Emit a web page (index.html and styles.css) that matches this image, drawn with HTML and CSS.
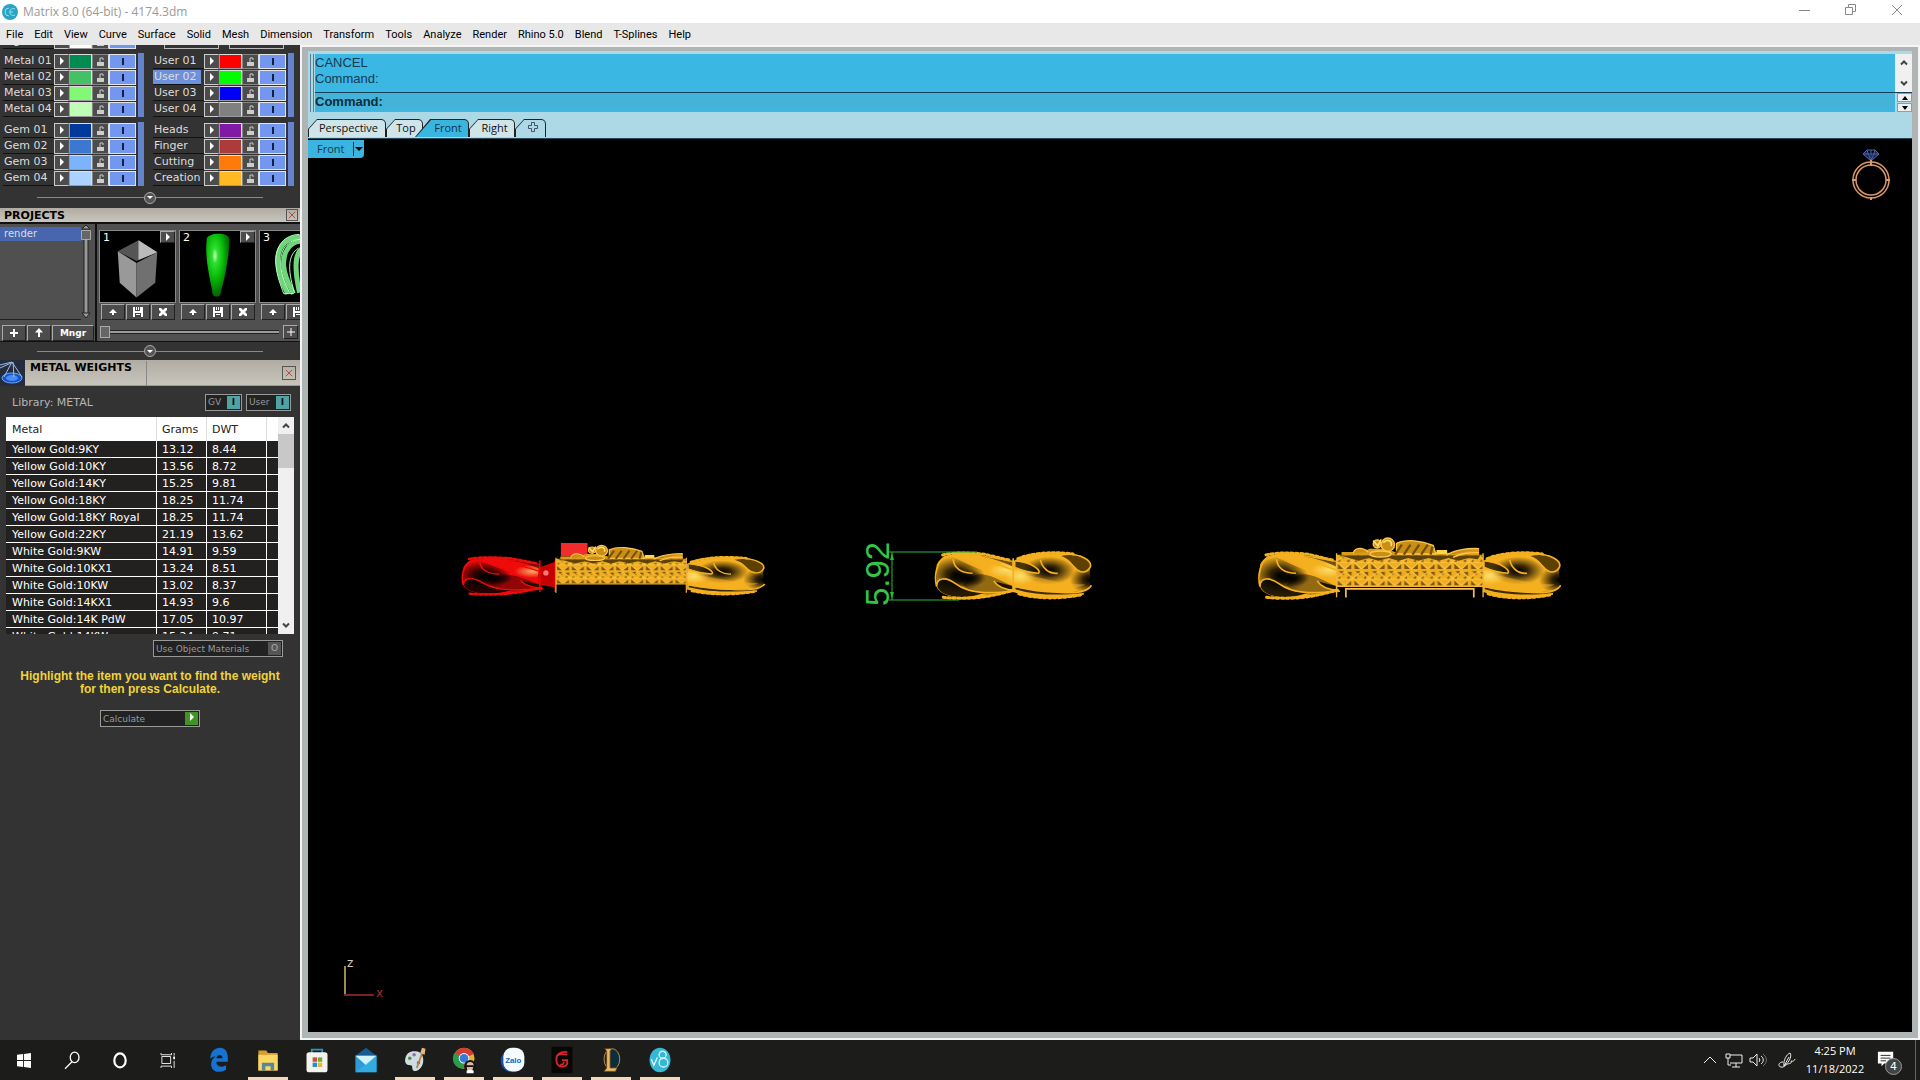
FILE: index.html
```
<!DOCTYPE html>
<html lang="en">
<head>
  <meta charset="UTF-8">
  <title>Matrix 8.0 (64-bit) - 4174.3dm</title>
  <link rel="stylesheet" href="styles.css">
</head>
<body>

<header class="titlebar">
  <svg class="app-icon" viewBox="0 0 16 16"><circle cx="8" cy="8" r="8" fill="#2ba3c4"/><path d="M7 4a4 4 0 1 0 0 8M13 5a3.500 3.500 0 1 0 0 6M8 8h3" fill="none" stroke="#8fe0f2"/></svg>
  <span class="title">Matrix 8.0 (64-bit) - 4174.3dm</span>
  <div class="window-buttons">
    <button aria-label="Minimize"><svg viewBox="0 0 12 12"><path d="M0 6.500h11"/></svg></button>
    <button aria-label="Restore"><svg viewBox="0 0 12 12"><path d="M.5 3.500h7v7h-7zM3.500 3V.5h7v7H8"/></svg></button>
    <button aria-label="Close"><svg viewBox="0 0 12 12"><path d="M1 1l10 10M11 1L1 11"/></svg></button>
  </div>
</header>

<nav class="menubar">
  <a href="#">File</a><a href="#">Edit</a><a href="#">View</a><a href="#">Curve</a>
  <a href="#">Surface</a><a href="#">Solid</a><a href="#">Mesh</a><a href="#">Dimension</a>
  <a href="#">Transform</a><a href="#">Tools</a><a href="#">Analyze</a><a href="#">Render</a>
  <a href="#">Rhino 5.0</a><a href="#">Blend</a><a href="#">T-Splines</a><a href="#">Help</a>
</nav>

<main class="main">
  <aside class="sidebar">

    <section class="layers">
      <div class="layers-scroll">
        <div class="layer-column" id="layersLeft"></div>
        <div class="layer-column">
          <div class="show-hide">
            <button>Hide <i></i></button>
            <button>Show <i></i></button>
          </div>
          <div id="layersRight"></div>
        </div>
      </div>
    </section>
    <div class="separator"><button aria-label="Collapse layers"></button></div>

    <section>
      <div class="panel-head">
        <h2>PROJECTS</h2>
        <button class="close" aria-label="Close projects"><svg viewBox="0 0 10 10"><path d="M1 1l8 8M9 1L1 9"/></svg></button>
      </div>
      <div class="projects">
        <div class="project-list">
          <div class="project-scroll">
            <div class="project-names"><a href="#">render</a></div>
            <svg class="vslider" viewBox="0 0 10 94"><path d="M5 14v74" stroke="#222" stroke-width="5"/><path d="M5 14v74" stroke="#999" stroke-width="3"/><path d="M1 4l4-4 4 4zM1 88h8l-4 5z" fill="#999" stroke="#222"/><path d="M.5 5.500h9v9h-9z" fill="#666" stroke="#aaa"/></svg>
          </div>
          <div class="project-buttons">
            <button class="bevel" aria-label="Add"><svg viewBox="0 0 10 10"><path d="M4 1h2v3h3v2H6v3H4V6H1V4h3z"/></svg></button>
            <button class="bevel" aria-label="Up"><svg viewBox="0 0 10 10"><path d="M5 0l4 4.500H6V9H4V4.500H1z"/></svg></button>
            <button class="bevel manager">Mngr</button>
          </div>
        </div>
        <div class="project-view">
          <div class="thumbs">
            <div class="thumb">
              <div class="thumb-picture"><span>1</span><button class="bevel play" aria-label="Play 1"><svg viewBox="0 0 6 8"><path d="M1 0l4 4-4 4z"/></svg></button>
                <svg viewBox="0 0 76 71"><path d="M18 20l21-11 19 12-21 9z" fill="#555"/><path d="M39 9l19 12-19 8z" fill="#bbb"/><path d="M18 20l19 12v35L20 52z" fill="#999"/><path d="M37 32l21-11-2 31-19 15z" fill="#707070"/></svg>
              </div>
              <div class="thumb-buttons"></div>
            </div>
            <div class="thumb">
              <div class="thumb-picture"><span>2</span><button class="bevel play" aria-label="Play 2"><svg viewBox="0 0 6 8"><path d="M1 0l4 4-4 4z"/></svg></button>
                <svg viewBox="0 0 76 71"><defs><radialGradient id="greenShine" cx=".38" cy=".35" r=".6"><stop offset="0" stop-color="#d5ffd0"/><stop offset=".2" stop-color="#30e030"/><stop offset=".6" stop-color="#08ba08"/><stop offset="1" stop-color="#037003"/></radialGradient></defs><path d="M27 8c0-7 23-8 23 0 0 18-5 41-9 55-1 4-7 4-8 0C31 49 25 30 27 8z" fill="url(#greenShine)"/></svg>
              </div>
              <div class="thumb-buttons"></div>
            </div>
            <div class="thumb">
              <div class="thumb-picture"><span>3</span>
                <svg viewBox="0 0 76 71"><path d="M42 6C28 5 17 14 18 32c1 14 6 22 10 31M42 10C31 10 23 20 24 35c1 12 6 20 10 28M43 17c-7 5-9 17-3 45" fill="none" stroke="#6fd67c" stroke-width="5"/><path d="M40 3C25 3 15 15 16 32c1 14 5 22 8 31h10M39 17c-10 6-12 20-4 45M42 8C28 8 20 18 21 34c1 12 5 20 9 28" fill="none" stroke="#b5ffbd"/></svg>
              </div>
              <div class="thumb-buttons"></div>
            </div>
          </div>
          <div class="zoom-row">
            <input type="range" min="0" max="100" value="0" aria-label="Thumbnail scroll">
            <button class="bevel" aria-label="More"><svg viewBox="0 0 10 10"><path d="M4.500 1h1v3.500H9v1H5.500V9h-1V5.500H1v-1h3.500z"/></svg></button>
          </div>
        </div>
      </div>
    </section>
    <div class="separator low"><button aria-label="Collapse projects"></button></div>

    <section>
      <div class="panel-head tall">
        <svg class="scale-icon" viewBox="0 0 25 26"><rect width="25" height="26" fill="#252d3d"/><ellipse cx="12" cy="18" rx="10" ry="5" fill="#1553c8" stroke="#69a7ff"/><ellipse cx="12" cy="18" rx="6" ry="3" fill="#4b8cf0"/><path d="M0 5l12-3 10 15M12 2L4 17M13 2l1 15M0 8l11-5" fill="none" stroke="#9cbce8"/></svg>
        <h2>METAL WEIGHTS</h2>
        <button class="close" aria-label="Close metal weights"><svg viewBox="0 0 10 10"><path d="M1 1l8 8M9 1L1 9"/></svg></button>
      </div>
      <div class="library">
        <span>Library: METAL</span>
        <button class="flat">GV<b class="teal">I</b></button>
        <button class="flat">User<b class="teal">I</b></button>
      </div>
      <div class="metal-box">
        <table class="metals">
          <thead><tr><th>Metal</th><th>Grams</th><th>DWT</th><th></th></tr></thead>
          <tbody id="metals"></tbody>
        </table>
        <div class="scrollbar">
          <svg viewBox="0 0 8 6"><path d="M1 5l3-3 3 3"/></svg>
          <div class="scroll-thumb"></div>
          <svg viewBox="0 0 8 6"><path d="M1 1l3 3 3-3"/></svg>
        </div>
      </div>
      <div class="materials"><button class="flat">Use Object Materials<b class="grey">O</b></button></div>
      <p class="hint">Highlight the item you want to find the weight<br>for then press Calculate.</p>
      <div class="calculate"><button class="flat">Calculate<b class="green"><svg viewBox="0 0 6 8"><path d="M1 0l4 4-4 4z"/></svg></b></button></div>
    </section>
  </aside>

  <div class="workspace">
    <div class="command">
      <div class="grip"></div>
      <div class="command-text">
        <div class="history">CANCEL<br>Command:</div>
        <div class="prompt"><label for="cmd">Command:</label><input id="cmd" type="text"></div>
      </div>
      <div class="command-side">
        <div class="scrollbar">
          <svg viewBox="0 0 8 6"><path d="M1 5l3-3 3 3"/></svg>
          <svg viewBox="0 0 8 6"><path d="M1 1l3 3 3-3"/></svg>
        </div>
        <button aria-label="Previous command"><svg viewBox="0 0 6 4"><path d="M0 4l3-4 3 4z"/></svg></button>
        <button aria-label="Next command"><svg viewBox="0 0 6 4"><path d="M0 0l3 4 3-4z"/></svg></button>
      </div>
    </div>

    <div class="tabs">
      <button class="tab perspective">Perspective</button>
      <button class="tab top">Top</button>
      <button class="tab active">Front</button>
      <button class="tab right">Right</button>
      <button class="tab add" aria-label="Add viewport"><svg viewBox="0 0 10 10"><path d="M3.500.5h3v3h3v3h-3v3h-3v-3h-3v-3h3z"/></svg></button>
    </div>

    <div class="viewport">
      <button class="view-label">Front <i></i></button>

      <svg class="scene" viewBox="308 139 1604 893">
        <defs>
          <radialGradient id="shade"><stop offset="0" stop-color="#000"/><stop offset=".35" stop-color="#000" stop-opacity=".8"/><stop offset="1" stop-color="#000" stop-opacity="0"/></radialGradient>
          <radialGradient id="shine"><stop offset="0" stop-color="#fff38a" stop-opacity=".7"/><stop offset="1" stop-color="#fff38a" stop-opacity="0"/></radialGradient>
          <pattern id="lattice" width="50" height="50" patternUnits="userSpaceOnUse" x="290" y="100">
            <rect width="50" height="50" fill="#efae1f"/>
            <path d="M4 47h16L4 31zM28 47h16V31zM7 4h14v12zM45 5v14L31 7zM2 24l9-6v12zM30 24l9-6v12z" fill="#7d560a"/>
            <path d="M0 25l25-21 25 21M0 25l25 22 25-22M0 27h50" fill="none" stroke="#ffc341" stroke-width="3"/>
          </pattern>
          <!-- left end of a link -->
          <g id="loopLeft">
            <path d="M60 135C75 102 120 98 170 101L290 122V212C250 214 225 234 180 236C115 238 68 226 60 200Z" fill="currentColor"/>
            <ellipse cx="120" cy="165" rx="85" ry="56" fill="url(#shade)"/>
            <ellipse cx="150" cy="175" rx="60" ry="26" fill="url(#shade)"/>
            <path d="M160 172c38-22 70 0 128 26v18c-60 16-110 10-150-20z" fill="#000" opacity=".4"/>
            <path d="M110 112C160 108 220 122 288 158V190C240 172 170 140 110 112z" fill="currentColor" opacity=".9"/>
            <ellipse cx="268" cy="150" rx="55" ry="24" fill="url(#shine)"/>
            <path d="M62 200C60 174 88 168 118 192C145 213 170 218 205 218C165 236 75 240 62 200z" fill="#000" opacity=".85"/>
            <path d="M232 184l56 14v13c-25-3-48-10-56-27z" fill="#1b1300"/>
            <path d="M190 108l98 18v14c-35-18-65-25-98-32z" fill="#000" opacity=".55"/>
            <g fill="none" stroke="currentColor" stroke-width="5">
              <path d="M60 200C52 168 60 125 85 110C150 100 220 125 290 150M60 200C60 172 88 170 118 192C160 224 220 220 300 214M110 118C112 145 135 160 168 160M232 183C245 205 270 210 298 212"/>
              <path d="M78 105C110 97 160 98 205 103L285 122M80 232C140 240 220 234 292 210" stroke-width="9" stroke-linecap="round" stroke-dasharray="7 8"/>
            </g>
          </g>
          <!-- right end of a link -->
          <g id="loopRight">
            <path d="M730 122C780 100 850 97 900 101C948 106 965 125 958 155C962 190 962 208 935 222C880 236 790 235 730 212Z" fill="currentColor"/>
            <ellipse cx="835" cy="152" rx="80" ry="42" fill="url(#shade)"/>
            <ellipse cx="958" cy="180" rx="60" ry="44" fill="url(#shade)"/>
            <path d="M745 168c60-5 80 20 200 26-50 22-140 18-200-6z" fill="currentColor" opacity=".5"/>
            <ellipse cx="750" cy="168" rx="48" ry="28" fill="url(#shine)"/>
            <path d="M735 124C780 130 812 146 806 160C775 156 755 150 735 142z" fill="#000" opacity=".7"/>
            <path d="M872 108C920 98 970 118 958 145C950 165 925 158 910 138C900 124 890 114 872 108z" fill="#5d4000"/>
            <path d="M735 202C810 222 880 222 955 210L935 222C850 226 790 225 735 208z" fill="#000" opacity=".75"/>
            <g fill="none" stroke="currentColor" stroke-width="5">
              <path d="M735 122C790 128 815 155 803 160C775 158 750 150 732 142M810 120C815 145 835 162 862 160M800 106C850 96 890 118 912 142C930 162 950 160 960 140C965 120 930 103 890 102M963 196C945 228 880 222 732 200M730 214C790 232 870 232 940 222"/>
              <path d="M742 116C790 97 850 95 908 102M745 222C800 237 870 238 935 224" stroke-width="9" stroke-linecap="round" stroke-dasharray="7 8"/>
            </g>
          </g>
          <!-- pave plate with the ornament on it -->
          <g id="plate">
            <path d="M290 104h440v94H290z" fill="url(#lattice)"/>
            <path d="M298 106h424l-8 12-28-4-30 8-30-8-30 8-30-8-30 8-30-8-30 8-30-8-30 8-30-8-30 8-28-8z" fill="#5d4308"/>
            <path d="M305 96h60l25-10h50l25 10h120l60 4 55-16h18v22H305z" fill="#d99b19"/>
            <g fill="#c88e15" stroke="#ffc649" stroke-width="4">
              <path d="M340 100c5-20 30-18 45-4M620 106c20-14 60-22 98-20M640 112c25-14 50-14 78-14"/>
              <ellipse cx="422" cy="102" rx="32" ry="9"/>
              <circle cx="412" cy="72" r="12"/><circle cx="444" cy="74" r="20"/>
              <path d="M470 70c30-14 75-8 110 6l8 26H470z"/>
            </g>
            <path d="M466 104l20-30M492 104l20-30M518 104l20-30M544 104l20-30M572 104l6-24" fill="none" stroke="#735008" stroke-width="7"/>
            <path d="M400 62l14 16 10-20M430 68c14-14 28-4 24 10" fill="none" stroke="#ffe06d" stroke-width="5"/>
            <path d="M590 90h32v12h-32z" fill="#ffd54b"/>
            <path d="M290 100v132M730 100v132M290 199h440" fill="none" stroke="#f6b53d" stroke-width="4"/>
          </g>
        </defs>

        <g color="#f5b01f">
          <g transform="translate(440 527) scale(.333)" color="#f00b0b">
            <use href="#loopLeft" transform="translate(10 10) scale(1 .82)"/>
            <path d="M296 122l50-18v78l-50-10z" fill="#d00000"/>
            <circle cx="322" cy="145" r="27" fill="#c40000"/><circle cx="318" cy="138" r="8" fill="#ff7676"/>
            <path d="M300 100v95M346 100v95" stroke="#f00" stroke-width="4"/>
            <path d="M363 48h80v40h-80z" fill="#f22b2b"/>
          </g>
          <g transform="translate(440 527) scale(.333)">
            <use href="#loopRight" transform="translate(12 10) scale(1 .82)"/>
            <use href="#plate" transform="translate(90 12) scale(.89 .8)"/>
          </g>
          <g transform="translate(850 520) scale(.333)">
            <use href="#loopLeft" transform="translate(200)"/>
            <use href="#loopRight" transform="translate(-238)"/>
            <path d="M490 115v100" stroke="#f8ae20" stroke-width="5"/>
          </g>
          <g transform="translate(1240 520) scale(.333)">
            <use href="#loopLeft"/>
            <use href="#loopRight"/>
            <use href="#plate"/>
            <path d="M318 233v-26h384v26" fill="none" stroke="#ffbe58" stroke-width="5"/>
          </g>
        </g>
        <path d="M889 552h88M889 600h70M892 552v48" fill="none" stroke="#2bb63c"/>
        <path d="M892 553l2 7h-4zM892 599l2-7h-4z" fill="#2bb63c"/>
        <text class="dimension" transform="translate(889 606) rotate(-90)">5.92</text>
      </svg>

      <svg class="ring" viewBox="0 0 40 52">
        <path d="M13 5l4-4h8l4 4-8 7zM13 5h16M17 1l4 11 4-11M21 1v11" fill="#1c2850" stroke="#4c66b5"/>
        <g fill="none" stroke="#dc9868" stroke-width="1.500"><circle cx="21" cy="31" r="18"/><circle cx="21" cy="31" r="15"/><path d="M21 11v6M2 31h4M36 31h4M21 48v3" stroke-width="2"/></g>
      </svg>
      <svg class="axis" viewBox="0 0 44 42">
        <path d="M2 8v28" stroke="#a08a4c" stroke-width="2"/><path d="M1 37h30" stroke="#7a2222" stroke-width="2"/>
        <text x="4" y="9" fill="#d8cbb0">z</text><text x="33" y="39" fill="#a03030">x</text>
      </svg>
    </div>
  </div>
</main>

<footer class="taskbar">
  <div class="apps">
    <button class="sys" aria-label="Start"><svg viewBox="0 0 32 32"><path d="M8 10l7-1v7H8zM16 9l8-1v8h-8zM8 17h7v7l-7-1zM16 17h8v8l-8-1z" fill="#fff"/></svg></button>
    <button class="sys" aria-label="Search"><svg viewBox="0 0 32 32"><ellipse cx="19" cy="13" rx="5" ry="6" fill="none" stroke="#fff" stroke-width="1.500"/><path d="M16 18l-8 8" stroke="#fff" stroke-width="1.500"/></svg></button>
    <button class="sys" aria-label="Cortana"><svg viewBox="0 0 32 32"><ellipse cx="16" cy="16.500" rx="6.500" ry="8" fill="none" stroke="#fff" stroke-width="2.500"/></svg></button>
    <button class="sys" aria-label="Task view"><svg viewBox="0 0 32 32"><path d="M9 12h10v8H9zM8 8v2h12V8M8 25v-2h12v2M23 8v3M23 17v8" fill="none" stroke="#fff"/><path d="M22 12h2v3h-2z" fill="#fff"/></svg></button>
    <button aria-label="Edge"><svg viewBox="0 0 32 32"><path d="M6 15C6 6 12 2 17 2c7 0 10 6 9 16H13c0 6 7 7 11 4v5c-8 5-17 2-17-6 0-4 2-7 5-9-4 0-6 3-6 3zM13 14h7c0-5-6-5-7 0z" fill="#1673d2"/></svg></button>
    <button class="running" aria-label="File Explorer"><svg viewBox="0 0 32 32"><path d="M5 5h9l2 3h11v20H5z" fill="#d99c2a"/><path d="M5 10h22v18H5z" fill="#fbd765"/><path d="M9 28v-9h14v9h-4v-5h-6v5z" fill="#56889c"/></svg></button>
    <button aria-label="Store"><svg viewBox="0 0 32 32"><path d="M10 9V4h12v5" fill="none" stroke="#2c98b5" stroke-width="2"/><rect x="4" y="7" width="24" height="23" rx="3" fill="#f2f3ef"/><path d="M11 13h5v5h-5z" fill="#c95230"/><path d="M17 13h5v5h-5z" fill="#74a839"/><path d="M11 19h5v5h-5z" fill="#2f8dc6"/><path d="M17 19h5v5h-5z" fill="#e6b83a"/></svg></button>
    <button aria-label="Mail"><svg viewBox="0 0 32 32"><path d="M4 11L16 2l12 9v18H4z" fill="#155d91"/><path d="M4 11h24v19H4z" fill="#2d9bd6"/><path d="M4 11h24L16 22z" fill="#d5f1fb"/><path d="M4 30L28 11v19z" fill="#32b7e8" opacity=".6"/></svg></button>
    <button class="running" aria-label="Paint"><svg viewBox="0 0 32 32"><path d="M15 6c8-1 12 6 10 14-2 7-8 10-11 8-2-2 0-6-3-6-6 0-7-4-6-8 1-5 5-8 10-8z" fill="#cfdde3"/><circle cx="10" cy="14" r="2" fill="#558b36"/><circle cx="15" cy="10" r="2" fill="#8d6bb5"/><circle cx="20" cy="19" r="2" fill="#3f76bd"/><path d="M25 6l-7 19" stroke="#be7f43" stroke-width="2"/><path d="M24 2l4 1-1 7-5-2z" fill="#e3b77b"/></svg></button>
    <button class="running" aria-label="Chrome"><svg viewBox="0 0 32 32"><circle cx="16" cy="14" r="12" fill="#e4b52c"/><path d="M16 14L5 9C10-1 24 1 27 9z" fill="#d43d32"/><path d="M16 14v12C4 26 1 15 5 8z" fill="#2b9b4c"/><circle cx="16" cy="14" r="6" fill="#fff"/><circle cx="16" cy="14" r="5" fill="#3977d8"/><circle cx="23" cy="23" r="7" fill="#181512"/><path d="M19 22c0-5 8-5 8 0l-2 8h-5z" fill="#d9bba2"/><path d="M18 22h9v2h-9z" fill="#111"/><path d="M19 28l4-1 4 1v3h-8z" fill="#fff"/></svg></button>
    <button class="running zalo" aria-label="Zalo"><svg viewBox="0 0 32 32"><circle cx="15" cy="17" r="13" fill="#154eb4"/><rect x="5" y="2" width="24" height="27" rx="10" fill="#f5faff"/><text x="7" y="19">Zalo</text></svg></button>
    <button class="running" aria-label="Garena"><svg viewBox="0 0 32 32"><path d="M4 1h24v30H4z" fill="#090606"/><path d="M22 7c-9-2-14 4-12 12 2 6 10 6 12 1v-4h-6M9 12c3-3 8-3 13-2M14 21c3 1 4-1 4-3" fill="none" stroke="#d8262b" stroke-width="2"/></svg></button>
    <button class="running" aria-label="League"><svg viewBox="0 0 32 32"><ellipse cx="17" cy="15" rx="9" ry="12" fill="#0c2d3b" stroke="#c69b4b"/><path d="M9 3h8l-2 3v19h8l-2 4H8l3-4V6z" fill="#e7ba69" stroke="#6c4219"/></svg></button>
    <button class="running" aria-label="Matrix"><svg viewBox="0 0 32 32"><ellipse cx="16" cy="16" rx="12" ry="14" fill="#36b7d6"/><path d="M6 15l3 7 4-9" fill="none" stroke="#d6f8ff" stroke-width="1.500"/><circle cx="19" cy="10" r="4" fill="none" stroke="#d6f8ff" stroke-width="1.500"/><circle cx="20" cy="19" r="5" fill="none" stroke="#d6f8ff" stroke-width="1.500"/></svg></button>
  </div>
  <div class="tray">
    <svg viewBox="0 0 20 20"><path d="M4 13l6-6 6 6"/></svg>
    <svg viewBox="0 0 20 20"><path d="M6 5h12v8H6M12 13v4M8 17h8M2 4h4v4H2zM4 8v7h3"/></svg>
    <svg viewBox="0 0 20 20"><path d="M2 8h3l4-4v12l-4-4H2zM11 8c1 1 1 3 0 4M13 6c3 2 3 6 0 8"/><path d="M15 4c5 4 4 9 0 12" opacity=".4"/></svg>
    <svg class="pen" viewBox="0 0 20 20"><path d="M7 16c-1-6 3-12 6-13 2 2 0 9-6 13zM7 16l5-9M6 12c-5 0-5 5-2 5 3 1 5-3 7-3 2-1 4 0 3-3 2 1 4-1 4-2"/></svg>
    <div class="clock">4:25 PM<br>11/18/2022</div>
    <button class="notes" aria-label="Notifications"><svg viewBox="0 0 20 20"><path d="M1 2h17v13H8l-3 3v-3H1z" fill="#fff"/><path d="M4 6h11M4 9h11M4 12h6" stroke="#1c1c1c"/></svg><span>4</span></button>
  </div>
</footer>

<script>
  const left = [["Lights", "#ffffff"], ["Metal 01", "#008c50"], ["Metal 02", "#45c165"], ["Metal 03", "#83f776"], ["Metal 04", "#bfffb5"],
    ["Gem 01", "#00389c"], ["Gem 02", "#3c78cf"], ["Gem 03", "#7db3fa"], ["Gem 04", "#aed2ff"]];
  const right = [["User 01", "#fe0000"], ["User 02", "#00fe00"], ["User 03", "#0000f5"], ["User 04", "#808080"],
    ["Heads", "#8019a6"], ["Finger", "#ae3b3b"], ["Cutting", "#ff7a08"], ["Creation", "#ffba24"]];

  function layerRow([name, color]) {
    return `<div class="layer${name === "User 02" ? " selected" : ""}">
      <span>${name}</span>
      <button class="bevel" aria-label="${name} options"><svg viewBox="0 0 6 8"><path d="M1 0l4 4-4 4z"/></svg></button>
      <button class="swatch" style="background:${color}" aria-label="${name} color"></button>
      <button class="bevel lock" aria-label="Lock ${name}"><svg viewBox="0 0 9 11"><path d="M1 6h7v4H1z"/><path d="M4 6V2h3v2" fill="none" stroke="#ccc"/></svg></button>
      <button class="toggle" aria-label="Show ${name}"><i></i></button>
    </div>`;
  }

  function group(rows) {
    return `<div class="layer-group">${rows.map(layerRow).join("")}</div>`;
  }

  document.getElementById("layersLeft").innerHTML =
    layerRow(left[0]) + group(left.slice(1, 5)) + group(left.slice(5));
  document.getElementById("layersRight").innerHTML =
    group(right.slice(0, 4)) + group(right.slice(4));

  const metals = [
    ["Yellow Gold:9KY", "13.12", "8.44"],
    ["Yellow Gold:10KY", "13.56", "8.72"],
    ["Yellow Gold:14KY", "15.25", "9.81"],
    ["Yellow Gold:18KY", "18.25", "11.74"],
    ["Yellow Gold:18KY Royal", "18.25", "11.74"],
    ["Yellow Gold:22KY", "21.19", "13.62"],
    ["White Gold:9KW", "14.91", "9.59"],
    ["White Gold:10KX1", "13.24", "8.51"],
    ["White Gold:10KW", "13.02", "8.37"],
    ["White Gold:14KX1", "14.93", "9.6"],
    ["White Gold:14K PdW", "17.05", "10.97"],
    ["White Gold:14KW", "15.24", "9.71"]
  ];
  document.getElementById("metals").innerHTML = metals
    .map(m => `<tr><td>${m[0]}</td><td>${m[1]}</td><td>${m[2]}</td><td></td></tr>`).join("");

  document.querySelectorAll(".thumb-buttons").forEach(el => {
    el.innerHTML = `
      <button class="bevel" aria-label="Load"><svg viewBox="0 0 10 10"><path d="M5 2l4 4H6v2H4V6H1z"/></svg></button>
      <button class="bevel" aria-label="Save"><svg viewBox="0 0 10 10"><path d="M0 0h2v4h5V0h3v10H0zM3 0h1v3H3zM5 0h1v3H5z"/><path d="M2 6h6v4H2z" fill="#444"/><path d="M3 7h4v1H3z"/></svg></button>
      <button class="bevel" aria-label="Delete"><svg viewBox="0 0 10 10"><path d="M1 1h2l2 2 2-2h2v2L7 5l2 2v2H7L5 7 3 9H1V7l2-2-2-2z"/></svg></button>`;
  });
</script>

</body>
</html>
```

FILE: styles.css
```
* {
  box-sizing: border-box;
}
body {
  margin: 0;
  height: 100vh;
  display: flex;
  flex-direction: column;
  overflow: hidden;
  background: #333;
  font-family: "DejaVu Sans", Verdana, sans-serif;
  font-size: 11px;
}
button {
  font: inherit;
  padding: 0;
  border: none;
  background: none;
  color: inherit;
  cursor: pointer;
}
a {
  color: inherit;
  text-decoration: none;
}
h2 {
  margin: 0;
  font-size: 11px;
  line-height: 13px;
}

/* title and menu */
.titlebar {
  display: flex;
  align-items: center;
  height: 23px;
  padding-left: 2px;
  background: #fff;
  color: #999;
  font-family: "Open Sans", sans-serif;
}
.title {
  font-size: 12px;
  line-height: 16px;
}
.app-icon {
  width: 16px;
  height: 16px;
  margin-right: 5px;
}
.window-buttons {
  display: flex;
  margin-left: auto;
}
.window-buttons button {
  width: 46px;
  height: 20px;
}
.window-buttons svg {
  width: 12px;
  height: 12px;
  fill: none;
  stroke: #888;
}
.menubar {
  display: flex;
  align-items: center;
  gap: 11px;
  height: 22px;
  padding-left: 6px;
  background: #e8e8e8;
  color: #000;
  font-family: Roboto, sans-serif;
}

.main {
  flex: 1;
  display: flex;
  min-height: 0;
}
.sidebar {
  width: 300px;
  flex: none;
  overflow: hidden;
  background: #333;
  color: #ddd;
}

/* layers */
.bevel {
  display: flex;
  align-items: center;
  justify-content: center;
  background: #4c4c4c;
  border: 1px solid;
  border-color: #aaa #222 #222 #aaa;
}
.bevel svg {
  width: 10px;
  height: 10px;
  fill: #fff;
}
.layers {
  height: 142px;
  display: flex;
  align-items: flex-end;
  padding-bottom: 1px;
  overflow: hidden;
}
.layers-scroll {
  display: flex;
}
.layer-column {
  width: 150px;
  padding-left: 3px;
}
.layer-group {
  margin-bottom: 5px;
  margin-right: 6px;
  border-right: 6px solid #6483cc;
}
.layer-column .layer-group:last-child {
  margin-bottom: 0;
}
.layer-column > .layer {
  margin-bottom: 4px;
}
.layer {
  display: flex;
  height: 16px;
  align-items: center;
}
.layer span {
  width: 51px;
  height: 15px;
  line-height: 13px;
  padding-left: 1px;
  font-size: 11px;
  white-space: nowrap;
  border-bottom: 1px solid #111;
}
.layer.selected span {
  width: 48px;
  margin-right: 3px;
  background: #6e91dc;
}
.layer button {
  height: 15px;
}
.layer .bevel {
  width: 15px;
  border-color: #ccc #555 #ccc #ccc;
}
.layer .bevel svg {
  width: 6px;
  height: 8px;
}
.swatch {
  width: 23px;
  border: 1px solid;
  border-color: #ddd #ddd #999 #999;
}
.layer .lock {
  width: 17px;
  border-color: #888 #ddd #888 #888;
}
.layer .lock svg {
  width: 9px;
  height: 11px;
  fill: #ccc;
}
.toggle {
  width: 27px;
  display: flex;
  align-items: center;
  justify-content: center;
  background: #7396ef;
  border: 1px solid #e4e4e4;
}
.toggle i {
  width: 2px;
  height: 7px;
  background: #102040;
}
.show-hide {
  display: flex;
  gap: 10px;
  height: 16px;
  margin-bottom: 4px;
  padding-left: 11px;
}
.show-hide button {
  width: 55px;
  border: 1px solid #bbb;
  line-height: 14px;
}
.show-hide i {
  display: inline-block;
  width: 12px;
  height: 6px;
  border: 1px solid #ccc;
  border-radius: 6px;
}

.separator {
  height: 21px;
  display: flex;
  align-items: center;
  justify-content: center;
}
.separator.low {
  height: 18px;
}
.separator::before,
.separator::after {
  content: "";
  width: 107px;
  height: 1px;
  background: #888;
}
.separator button {
  width: 12px;
  height: 12px;
  display: flex;
  align-items: center;
  justify-content: center;
  background: #555;
  border: 1px solid #aaa;
  border-radius: 50%;
}
.separator button::before {
  content: "";
  border: 3px solid transparent;
  border-top-color: #fff;
  border-bottom: none;
}

/* projects */
.panel-head {
  display: flex;
  height: 16px;
  align-items: center;
  padding: 0 2px 0 4px;
  background: linear-gradient(#b0aca4, #c8c5bd);
  border-bottom: 2px solid #111;
  color: #000;
}
.close {
  width: 12px;
  height: 12px;
  margin-left: auto;
  display: flex;
  align-items: center;
  justify-content: center;
  border: 1px solid #555;
}
.close svg {
  width: 8px;
  height: 8px;
  stroke: #b32c22;
}
.panel-head.tall {
  height: 26px;
  padding: 0 4px 0 0;
  border-bottom: 1px solid #999;
}
.tall h2 {
  width: 122px;
  height: 24px;
  padding-left: 5px;
  border-right: 1px solid #888;
}
.tall .close {
  width: 14px;
  height: 14px;
}
.scale-icon {
  width: 25px;
  height: 26px;
}
.projects {
  display: flex;
  height: 118px;
  background: #505050;
  border-bottom: 1px solid #111;
}
.project-list {
  width: 97px;
  flex: none;
  border-right: 2px solid #111;
}
.project-scroll {
  display: flex;
  height: 96px;
  padding-top: 1px;
}
.project-names {
  width: 81px;
  padding-top: 2px;
  border-bottom: 1px solid #222;
}
.project-names a {
  display: block;
  height: 14px;
  padding-left: 4px;
  line-height: 14px;
  font-size: 10px;
  background: #4866ad;
}
.vslider {
  width: 10px;
  height: 94px;
}
.project-buttons {
  display: flex;
  gap: 1px;
  padding: 5px 0 0 2px;
}
.project-buttons button {
  width: 24px;
  height: 16px;
  color: #fff;
}
.project-buttons .manager {
  width: 42px;
  font-size: 9px;
  font-weight: bold;
}
.project-view {
  flex: 1;
  min-width: 0;
  padding: 6px 0 0 2px;
  overflow: hidden;
}
.thumbs {
  display: flex;
  gap: 3px;
}
.thumb {
  width: 77px;
  flex: none;
}
.thumb-picture {
  position: relative;
  height: 73px;
  background: #000;
  border: 1px solid #888;
}
.thumb-picture span {
  position: absolute;
  left: 3px;
  top: 0;
  color: #fff;
}
.thumb-picture > svg {
  display: block;
  width: 75px;
  height: 71px;
}
.thumb .play {
  position: absolute;
  right: 0;
  top: 0;
  width: 15px;
  height: 12px;
}
.play svg {
  width: 6px;
  height: 8px;
}
.thumb-buttons {
  display: flex;
  gap: 1px;
  padding: 1px 0 0 2px;
}
.thumb-buttons button {
  width: 24px;
  height: 16px;
}
.zoom-row {
  display: flex;
  align-items: center;
  gap: 4px;
  padding: 5px 2px 0 1px;
}
.zoom-row input {
  flex: 1;
  min-width: 0;
  height: 12px;
  margin: 0;
  appearance: none;
  background: linear-gradient(#222, #222) center / 100% 4px no-repeat;
}
.zoom-row input::-webkit-slider-runnable-track {
  height: 12px;
  background: linear-gradient(#999, #999) center / 100% 2px no-repeat;
}
.zoom-row input::-webkit-slider-thumb {
  appearance: none;
  width: 10px;
  height: 12px;
  background: #666;
  border: 1px solid #aaa;
}
.zoom-row button {
  width: 15px;
  height: 14px;
}

/* metal weights */
.library {
  display: flex;
  gap: 4px;
  align-items: center;
  height: 31px;
  padding: 1px 9px 0 12px;
  color: #b5b5b5;
}
.library span {
  margin-right: auto;
}
.flat {
  display: flex;
  align-items: center;
  justify-content: space-between;
  height: 17px;
  padding: 0 1px 0 2px;
  background: #222;
  border: 1px solid #999;
  color: #999;
  font-size: 9px;
}
.flat b {
  width: 13px;
  height: 13px;
  line-height: 13px;
  text-align: center;
}
.flat svg {
  width: 6px;
  height: 8px;
  fill: #fff;
}
.flat .teal {
  background: #4fa3a5;
  color: #111;
}
.flat .grey {
  background: #555;
  color: #aaa;
  font-weight: normal;
}
.flat .green {
  background: #3f9424;
}
.library .flat {
  width: 37px;
}
.library .flat:last-child {
  width: 45px;
}
.metal-box {
  display: flex;
  height: 217px;
  margin: 0 6px;
  overflow: hidden;
}
.metals {
  width: 272px;
  height: 0;
  table-layout: fixed;
  border-collapse: separate;
  border-spacing: 0;
  background: #23211f;
  color: #fff;
}
.metals th {
  height: 24px;
  padding: 0 0 0 6px;
  background: #fff;
  color: #222;
  font-weight: normal;
  text-align: left;
  border-right: 1px solid #ddd;
}
.metals td {
  height: 17px;
  padding: 1px 0 0 6px;
  line-height: 15px;
  white-space: nowrap;
  border-right: 1px solid #fff;
  border-bottom: 1px solid #fff;
}
.metals th:nth-child(1) {
  width: 151px;
}
.metals th:nth-child(2) {
  width: 50px;
}
.metals th:nth-child(3) {
  width: 60px;
}
.metals th:nth-child(n + 2),
.metals td:nth-child(n + 2) {
  padding-left: 5px;
}
.metals th:last-child,
.metals td:last-child {
  border-right: none;
}
.scrollbar {
  width: 16px;
  display: flex;
  flex-direction: column;
  align-items: center;
  background: #f0f0f0;
}
.scrollbar svg {
  width: 8px;
  height: 17px;
  fill: none;
  stroke: #444;
  stroke-width: 2;
}
.scroll-thumb {
  width: 16px;
  height: 34px;
  margin-bottom: auto;
  background: #c8c8c8;
}
.materials {
  display: flex;
  justify-content: flex-end;
  padding: 6px 17px 0 0;
}
.materials .flat {
  width: 130px;
}
.hint {
  margin: 13px 0 14px;
  color: #f1d335;
  font: bold 12px/13px "Liberation Sans", Arial, sans-serif;
  text-align: center;
}
.calculate {
  display: flex;
  justify-content: center;
}
.calculate .flat {
  width: 100px;
}

/* command area */
.workspace {
  flex: 1;
  min-width: 0;
  display: flex;
  flex-direction: column;
  background: #add8e6;
  border: 8px solid #afb4b5;
  border-top-width: 6px;
  outline: 2px solid #f4f4f4;
  outline-offset: -2px;
}
.command {
  display: flex;
  height: 61px;
  padding-top: 3px;
  color: #143a56;
  font: 13px/16px "Liberation Sans", Arial, sans-serif;
}
.grip {
  width: 4px;
  margin: 0 1px 0 2px;
  border: 1px solid #557f90;
  border-width: 0 1px;
}
.command-text {
  flex: 1;
  background: #3ab7e2;
}
.history {
  height: 39px;
  padding-top: 1px;
  border-bottom: 1px solid #163f58;
}
.prompt {
  display: flex;
  align-items: center;
  height: 17px;
  background: #43b3d9;
  color: #0d2c3e;
  font-weight: bold;
}
.prompt input {
  flex: 1;
  height: 16px;
  border: none;
  background: none;
}
.command-side {
  width: 17px;
}
.command-side .scrollbar {
  width: 17px;
  height: 39px;
  justify-content: space-between;
  border-bottom: 1px solid #163f58;
}
.command-side button {
  display: flex;
  align-items: center;
  justify-content: center;
  width: 15px;
  height: 9px;
  margin: 0 0 1px 2px;
  background: #f0f0f0;
  border: 1px solid #999;
}
.command-side button svg {
  width: 6px;
  height: 4px;
}

/* viewport tabs */
.tabs {
  display: flex;
  height: 27px;
  padding-top: 7px;
  font: 11px/18px "Open Sans", sans-serif;
  border-bottom: 1px solid #21495a;
}
.tab {
  position: relative;
  z-index: 0;
  height: 18px;
  padding-left: 7px;
  background: #222;
  color: #111;
  border-radius: 0 5px 0 0;
  clip-path: polygon(0 10px, 9px 0, 100% 0, 100% 100%, 0 100%);
}
.tab::before {
  content: "";
  position: absolute;
  z-index: -1;
  inset: 1px 1px 0 1px;
  background: #cfe5ea;
  border-radius: 0 4px 0 0;
  clip-path: polygon(0 9px, 8px 0, 100% 0, 100% 100%, 0 100%);
}
.perspective {
  width: 78px;
  padding-left: 3px;
}
.top {
  width: 37px;
  padding-left: 3px;
}
.tab.active {
  width: 54px;
  margin-left: -8px;
  padding-left: 12px;
  color: #0c3650;
  clip-path: polygon(0 100%, 15px 0, 100% 0, 100% 100%);
}
.tab.active::before {
  background: #3ab5e0;
  clip-path: polygon(0 100%, 15px 0, 100% 0, 100% 100%);
}
.tab.right {
  width: 46px;
  padding-left: 5px;
}
.tab.add {
  width: 31px;
  padding-left: 4px;
}
.tab.add::before {
  background: #add8e6;
}
.tab svg {
  width: 10px;
  height: 10px;
  fill: none;
  stroke: #456;
}
.viewport {
  position: relative;
  flex: 1;
  min-height: 0;
  background: #000;
}
.view-label {
  position: absolute;
  left: 0;
  top: 1px;
  width: 56px;
  height: 18px;
  display: flex;
  align-items: center;
  padding-left: 9px;
  background: #3ab5e0;
  color: #10384e;
  font: 11px/18px "Open Sans", sans-serif;
  border-radius: 0 0 4px 0;
}
.view-label i {
  height: 14px;
  margin-left: auto;
  padding: 5px 1px 0;
  border-left: 1px solid #135;
}
.view-label i::before {
  content: "";
  display: block;
  border: 4px solid transparent;
  border-top-color: #000;
  border-bottom: none;
}
.scene {
  display: block;
  width: 100%;
  height: 100%;
}
.dimension {
  font: 33px "Liberation Sans", Arial, sans-serif;
  fill: #35c546;
}
.ring {
  position: absolute;
  right: 22px;
  top: 10px;
  width: 40px;
  height: 52px;
}
.axis {
  position: absolute;
  left: 35px;
  bottom: 32px;
  width: 44px;
  height: 42px;
  font-size: 12px;
}

/* taskbar */
.taskbar {
  display: flex;
  justify-content: space-between;
  height: 40px;
  background: #1c1c1b;
  color: #fff;
}
.apps {
  display: flex;
}
.apps button {
  width: 49px;
  height: 40px;
  display: flex;
  align-items: center;
  justify-content: center;
}
.apps .sys {
  width: 48px;
}
.apps .sys:nth-child(4) {
  margin-right: 2px;
}
.apps svg {
  width: 28px;
  height: 28px;
  flex: none;
}
.apps .running {
  background: linear-gradient(#f1d9b9, #f1d9b9) center bottom / 40px 3px no-repeat;
}
.zalo text {
  font: bold 9px "Liberation Sans", sans-serif;
  fill: #1766c4;
}
.tray {
  display: flex;
  align-items: center;
  padding-right: 4px;
}
.tray > svg {
  width: 20px;
  height: 20px;
  margin-right: 4px;
  fill: none;
  stroke: #eee;
}
.tray .pen {
  margin: 0 8px 0 5px;
}
.clock {
  width: 60px;
  font: 11px/18px "Open Sans", sans-serif;
  text-align: center;
}
.notes {
  position: relative;
  height: 40px;
  margin-left: 12px;
  width: 39px;
  border-right: 1px solid #666;
  text-align: left;
}
.notes svg {
  width: 18px;
  height: 18px;
}
.notes span {
  position: absolute;
  left: 8px;
  top: 18px;
  width: 17px;
  height: 17px;
  border: 1px solid #999;
  border-radius: 50%;
  background: #444;
  line-height: 15px;
  text-align: center;
}
```
